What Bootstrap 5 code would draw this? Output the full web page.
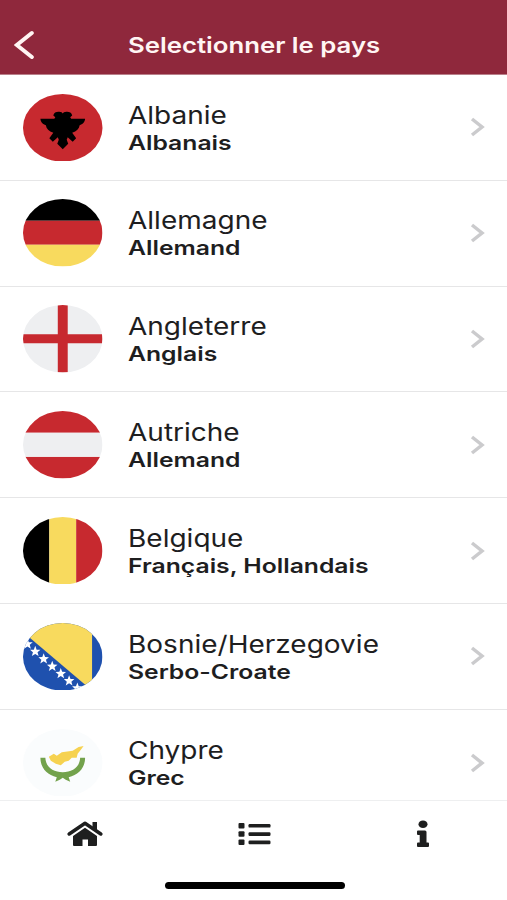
<!DOCTYPE html>
<html lang="fr">
<head>
<meta charset="utf-8">
<meta name="viewport" content="width=device-width, initial-scale=1">
<title>Selectionner le pays</title>
<link href="https://cdn.jsdelivr.net/npm/bootstrap@5.3.0/dist/css/bootstrap.min.css" rel="stylesheet">
<style>
  body { font-family: Inter, "Liberation Sans", sans-serif; color: #1e1e1f; background: #fff; }
  .app-bar { height: 75px; padding: 15px 0 0 14px; background: #8f283c; border-bottom: 1px solid #b9808a; color: #fff5f3; }
  .app-bar .back { width: 114px; }
  .wide { display: block; width: max-content; transform-origin: 0 50%; white-space: nowrap; }
  .app-title { font-size: 22px; font-weight: 600; line-height: 28px; transform: scaleX(1.17); }
  .country { height: 105.8px; flex: none; padding: 0 22px 0 23px; border: 0; border-bottom: 1.5px solid #e6e6e7; border-radius: 0; color: inherit; background: #fff; }
  .flag { width: 79.5px; height: 67.6px; margin-right: 25px; flex: none; }
  .country-text { padding-top: 3px; }
  .country-name { font-size: 24.5px; font-weight: 400; line-height: 28px; transform: scaleX(1.143); }
  .country-lang { font-size: 20px; font-weight: 600; line-height: 28.5px; transform: scaleX(1.235); }
  .tab-bar { height: 100.5px; border-top: 1px solid #eeeff0; color: #1e1f1f; }
  .tabs { height: 66px; }
  .home-bar { width: 180px; height: 7px; margin-top: 15px; background: #000; transform: translateX(1px); }
</style>
</head>
<body class="vh-100 overflow-hidden d-flex flex-column">
<svg width="0" height="0" class="position-absolute" aria-hidden="true">
  <defs>
    <clipPath id="oval"><ellipse cx="40" cy="34" rx="40" ry="34"/></clipPath>
    <path id="star" d="M0-5.500 1.400-1.700 5.300-1.600 2.300 1 3.400 4.800 0 2.600-3.400 4.800-2.300 1-5.300-1.600-1.400-1.700Z" fill="#fff"/>
    <symbol id="next" viewBox="0 0 15 20"><path d="M2 2 12 10 2 18" fill="none" stroke="#cbcbcd" stroke-width="3.500"/></symbol>
  </defs>
</svg>

<header class="app-bar d-flex align-items-center flex-shrink-0">
  <a href="#" class="back d-flex" aria-label="Retour">
    <svg width="21" height="30" viewBox="0 0 21 30"><path d="M17.800 3 2.800 15 17.800 27" fill="none" stroke="#fff5f3" stroke-width="4" stroke-linecap="round" stroke-linejoin="miter"/></svg>
  </a>
  <h1 class="app-title wide mb-0">Selectionner le pays</h1>
</header>

<main class="list-group list-group-flush flex-grow-1 overflow-hidden" style="min-height:0">
  <a href="#" class="country list-group-item d-flex align-items-center">
    <svg class="flag" viewBox="0 0 80 68"><ellipse cx="40" cy="34" rx="40" ry="34" fill="#c7292f"/>
      <path d="M17.500 25H31.500L32.500 23.500 30.500 21.500C31 18.500 34 17.500 36.500 17.800Q39.500 18 40 19.500Q40.500 18 43.500 17.800C46 17.500 49 18.500 49.500 21.500L47.500 23.500 48.500 25H62.500C62 29 60 30.500 57 31.500C56.500 35 54 37.500 49.500 39L53.500 44.500 50 48 45 43.500 44 46 45.500 50 40 55.500 34.500 50 36 46 35 43.500 30 48 26.500 44.500 30.500 39C26 37.500 23.500 35 23 31.500C20 30.500 18 29 17.500 25Z" fill="#000"/></svg>
    <div class="country-text flex-grow-1"><span class="country-name wide">Albanie</span><span class="country-lang wide">Albanais</span></div>
    <svg width="15" height="20"><use href="#next"/></svg>
  </a>
  <a href="#" class="country list-group-item d-flex align-items-center">
    <svg class="flag" viewBox="0 0 80 68"><g clip-path="url(#oval)"><path d="M0 0H80V22H0Z" fill="#000"/><path d="M0 22H80V46H0Z" fill="#c7292f"/><path d="M0 46H80V68H0Z" fill="#f8da5e"/></g></svg>
    <div class="country-text flex-grow-1"><span class="country-name wide">Allemagne</span><span class="country-lang wide">Allemand</span></div>
    <svg width="15" height="20"><use href="#next"/></svg>
  </a>
  <a href="#" class="country list-group-item d-flex align-items-center">
    <svg class="flag" viewBox="0 0 80 68"><g clip-path="url(#oval)"><path d="M0 0H80V68H0Z" fill="#eeeff1"/><path d="M35 0H45V68H35ZM0 29.500H80V38.500H0Z" fill="#c7292f"/></g></svg>
    <div class="country-text flex-grow-1"><span class="country-name wide">Angleterre</span><span class="country-lang wide">Anglais</span></div>
    <svg width="15" height="20"><use href="#next"/></svg>
  </a>
  <a href="#" class="country list-group-item d-flex align-items-center">
    <svg class="flag" viewBox="0 0 80 68"><g clip-path="url(#oval)"><path d="M0 0H80V22H0ZM0 46H80V68H0Z" fill="#c7292f"/><path d="M0 22H80V46H0Z" fill="#eeeff1"/></g></svg>
    <div class="country-text flex-grow-1"><span class="country-name wide">Autriche</span><span class="country-lang wide">Allemand</span></div>
    <svg width="15" height="20"><use href="#next"/></svg>
  </a>
  <a href="#" class="country list-group-item d-flex align-items-center">
    <svg class="flag" viewBox="0 0 80 68"><g clip-path="url(#oval)"><path d="M0 0H26.500V68H0Z" fill="#000"/><path d="M26.500 0H53.500V68H26.500Z" fill="#f8da5e"/><path d="M53.500 0H80V68H53.500Z" fill="#c7292f"/></g></svg>
    <div class="country-text flex-grow-1"><span class="country-name wide">Belgique</span><span class="country-lang wide">Français, Hollandais</span></div>
    <svg width="15" height="20"><use href="#next"/></svg>
  </a>
  <a href="#" class="country list-group-item d-flex align-items-center">
    <svg class="flag" viewBox="0 0 80 68"><g clip-path="url(#oval)"><path d="M0 0H80V68H0Z" fill="#1f51ae"/><path d="M0 9V0H69.500V68Z" fill="#f8da5e"/>
      <use href="#star" x="4.500" y="21"/><use href="#star" x="12.300" y="28.500"/><use href="#star" x="20.800" y="36"/><use href="#star" x="29.400" y="43.500"/><use href="#star" x="38" y="50.800"/><use href="#star" x="46.400" y="58"/><use href="#star" x="54.700" y="65.300"/></g></svg>
    <div class="country-text flex-grow-1"><span class="country-name wide">Bosnie/Herzegovie</span><span class="country-lang wide">Serbo-Croate</span></div>
    <svg width="15" height="20"><use href="#next"/></svg>
  </a>
  <a href="#" class="country list-group-item d-flex align-items-center">
    <svg class="flag" viewBox="0 0 80 68"><ellipse cx="40" cy="34" rx="40" ry="34" fill="#fafcfd"/>
      <path d="M26 28 31 25 34 27 39 23.500 50 22 56 18 61 17 58 21 55 25 54 29 49 29 46 32 42 33 38 36.500 33 35 28 32Z" fill="#f6d250"/>
      <path d="M17.500 29H22.500C23 39 31 43.500 40 43.500S57 39 57.500 29H62.500C62.500 39 56 46 46 48.500L47.500 53 43 51 40 49 37 51 32.500 53 34 48.500C24 46 17.500 39 17.500 29Z" fill="#73a24c"/></svg>
    <div class="country-text flex-grow-1"><span class="country-name wide">Chypre</span><span class="country-lang wide">Grec</span></div>
    <svg width="15" height="20"><use href="#next"/></svg>
  </a>
</main>

<footer class="tab-bar flex-shrink-0 bg-white">
  <nav class="tabs row g-0 align-items-center text-center">
    <a href="#" class="col text-reset" aria-label="Accueil">
      <svg width="36" height="26" viewBox="0 0 36 26" fill="currentColor"><path d="M2.200 13 18 2.300 33.800 13" fill="none" stroke="currentColor" stroke-width="3.500" stroke-linecap="round" stroke-linejoin="round"/><path d="M25.500 1H30V11L25.500 8ZM18 6.800 30 15V24Q30 25 29 25H21V18.500H15.500V25H7Q6 25 6 24V15Z"/></svg>
    </a>
    <a href="#" class="col text-reset" aria-label="Liste">
      <svg width="34" height="24" viewBox="-1 0 34 24" fill="currentColor"><rect x=".5" y="1" width="6" height="5.500" rx="1"/><rect x=".5" y="9.300" width="6" height="5.500" rx="1"/><rect x=".5" y="17.600" width="6" height="5.500" rx="1"/><rect x="10.500" y="2" width="22" height="3.600" rx="1.200"/><rect x="10.500" y="10.300" width="22" height="3.600" rx="1.200"/><rect x="10.500" y="18.600" width="22" height="3.600" rx="1.200"/></svg>
    </a>
    <a href="#" class="col text-reset" aria-label="Informations">
      <svg width="14" height="28" viewBox="0 0 14 28" fill="currentColor"><ellipse cx="7" cy="4.200" rx="4.500" ry="3.800"/><path d="M2 10.500H9Q10.500 10.500 10.500 12V22.500H12Q13 22.500 13 23.500V26Q13 27 12 27H2Q1 27 1 26V23.500Q1 22.500 2 22.500H3.700V15H2Q1 15 1 14V11.500Q1 10.500 2 10.500Z"/></svg>
    </a>
  </nav>
  <div class="home-bar rounded-pill mx-auto"></div>
</footer>
<script src="https://cdn.jsdelivr.net/npm/bootstrap@5.3.0/dist/js/bootstrap.bundle.min.js"></script>
</body>
</html>
